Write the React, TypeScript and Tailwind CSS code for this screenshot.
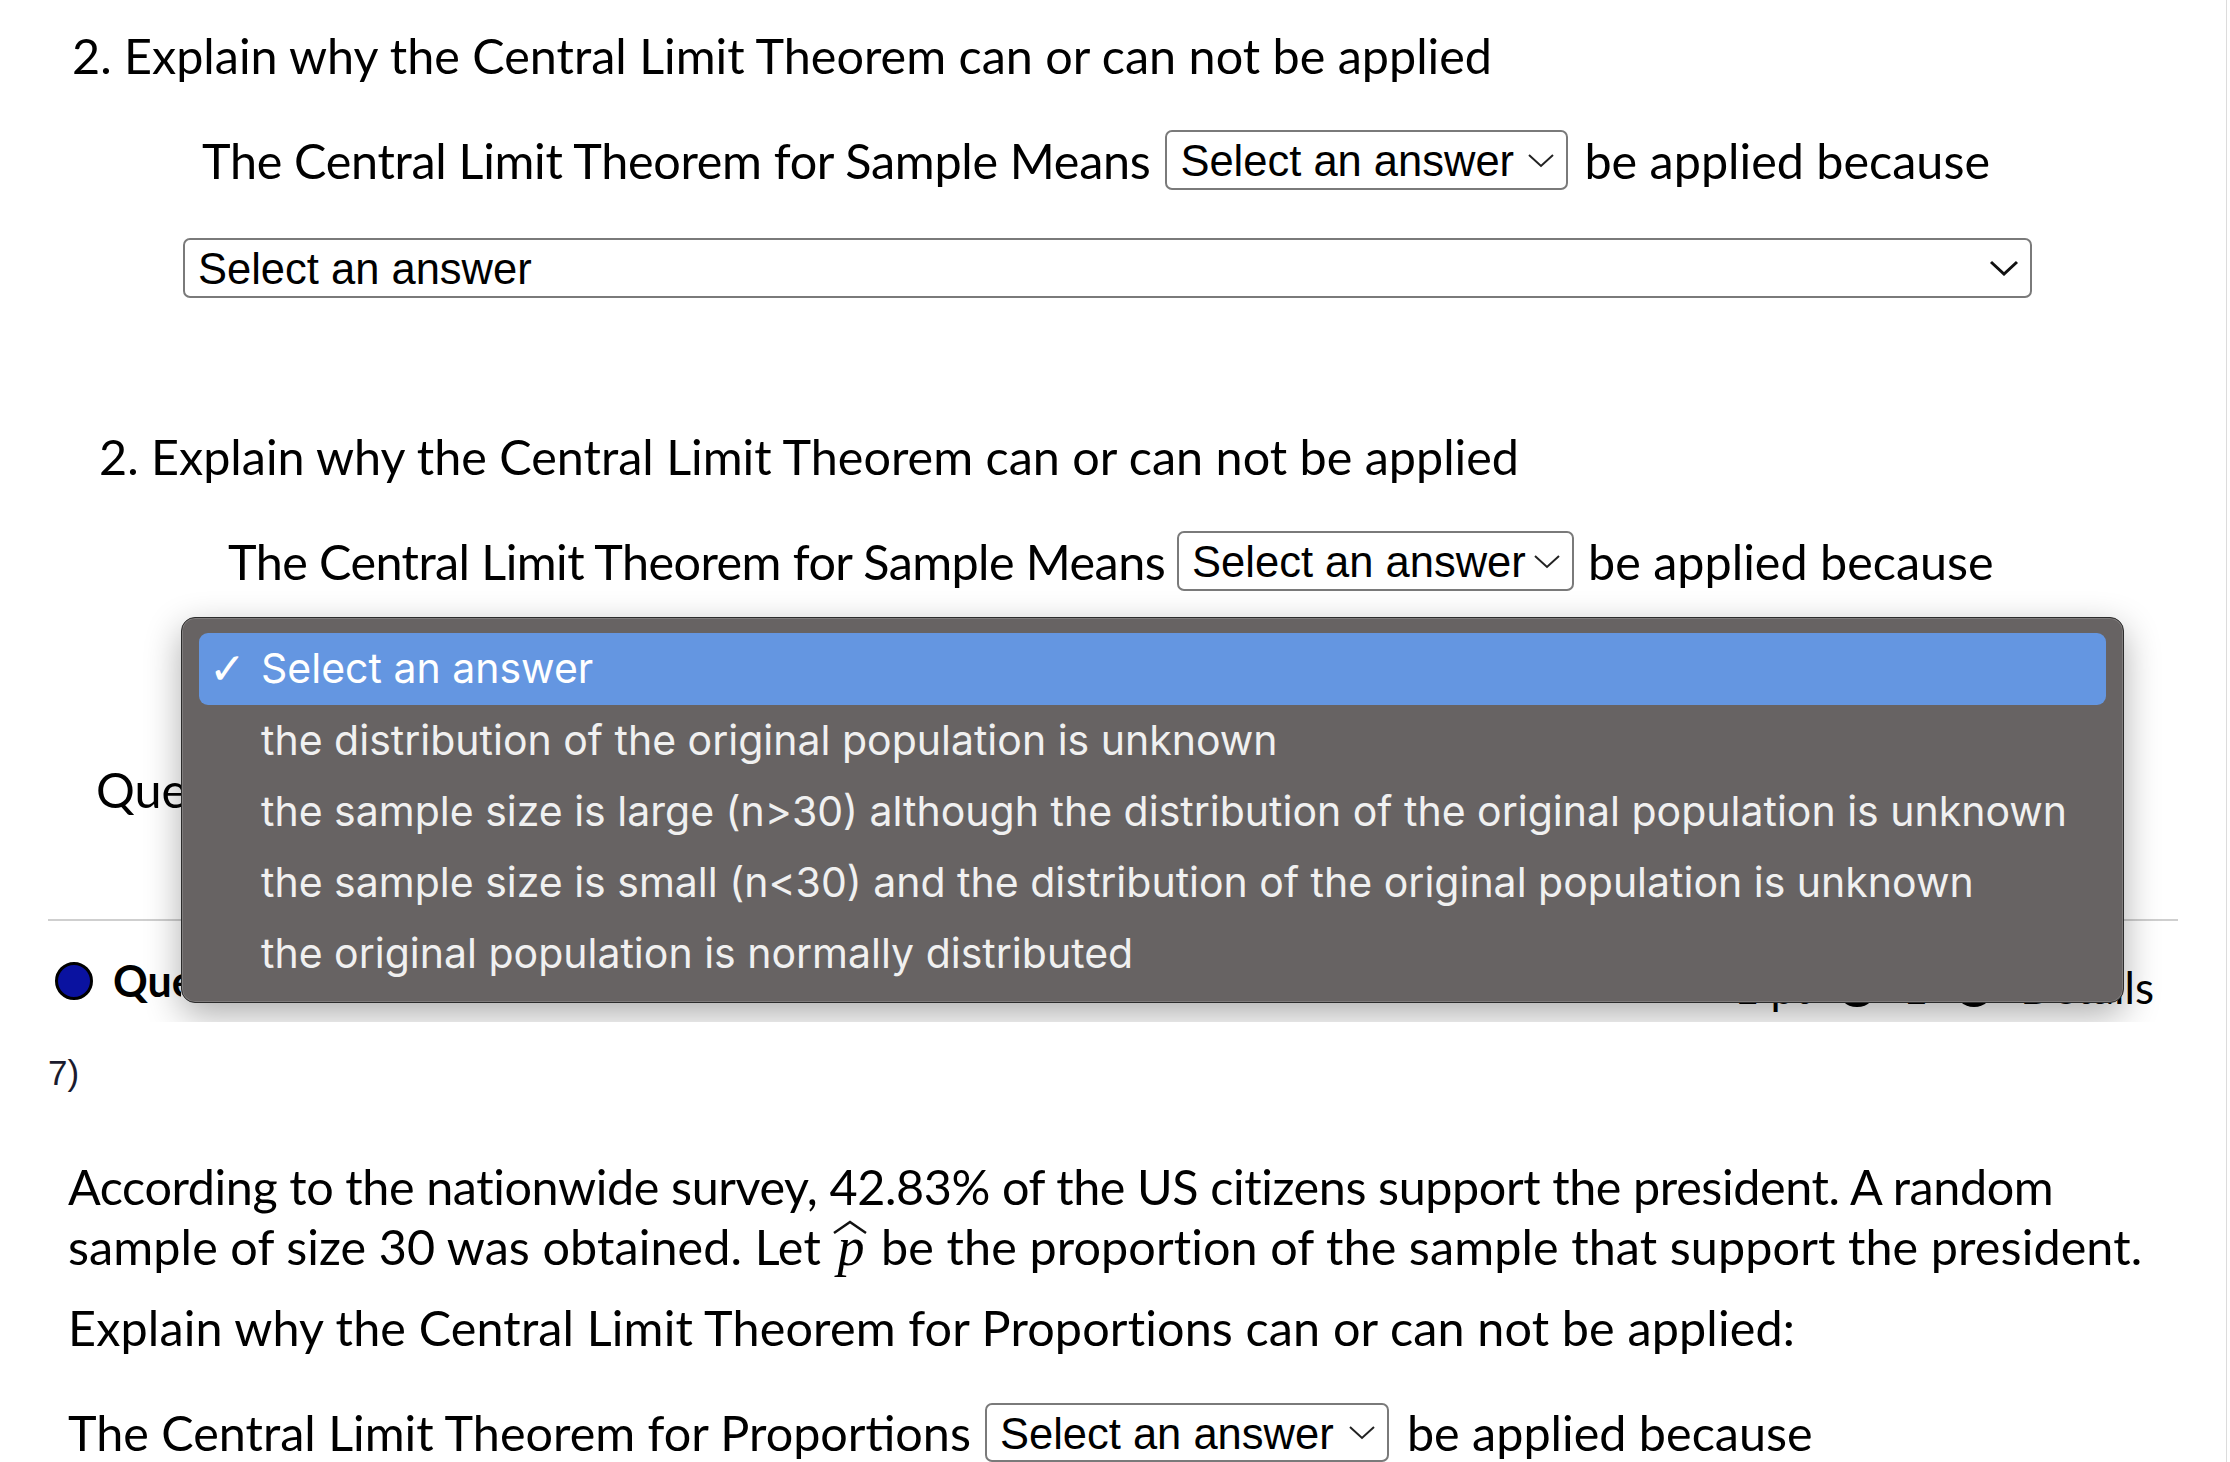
import React from "react";

const body = "font-['Lato','Liberation_Sans',sans-serif] text-[48.5px] text-black";
const arial = "font-['Liberation_Sans',Arial,sans-serif]";

function Chevron({ big }: { big?: boolean }) {
  return big ? (
    <svg width="30" height="16" viewBox="0 0 30 16" className="shrink-0">
      <path d="M2 2 L15 14 L28 2" fill="none" stroke="#111" strokeWidth="3" />
    </svg>
  ) : (
    <svg width="28" height="15" viewBox="0 0 28 15" className="shrink-0">
      <path d="M2 2 L14 13 L26 2" fill="none" stroke="#222" strokeWidth="2" />
    </svg>
  );
}

function FakeSelect({ className, big }: { className: string; big?: boolean }) {
  return (
    <div
      className={`flex items-center justify-between border-2 border-[#7a7a7a] rounded-[7px] bg-white pl-[13px] pr-[11px] ${arial} text-[43.5px] text-black ${className}`}
    >
      <span className="whitespace-nowrap pt-[4px]">Select an answer</span>
      <Chevron big={big} />
    </div>
  );
}

const options = [
  "the distribution of the original population is unknown",
  "the sample size is large (n>30) although the distribution of the original population is unknown",
  "the sample size is small (n<30) and the distribution of the original population is unknown",
  "the original population is normally distributed",
];

function Popup() {
  return (
    <div className="absolute left-[181px] top-[617px] w-[1943px] h-[386px] rounded-[14px] bg-[#676363] border border-[#2c2c2c] shadow-[0_12px_36px_rgba(0,0,0,0.32),inset_0_0_0_1px_rgba(255,255,255,0.16)] px-[17px] pt-[15px] font-['Inter','Liberation_Sans',sans-serif] text-[41px] text-[#f0f0f0]">
      <div className="flex items-center h-[72px] rounded-[9px] bg-[#6496e1] text-white">
        <span className="w-[62px] pl-[10px] font-['DejaVu_Sans',sans-serif] font-bold text-[44px]">✓</span>
        <span>Select an answer</span>
      </div>
      {options.map((o) => (
        <div key={o} className="flex items-center h-[71px] pl-[62px] whitespace-nowrap">
          {o}
        </div>
      ))}
    </div>
  );
}

function PHat() {
  return (
    <span className="relative inline-block mx-[4px]">
      <svg width="36" height="16" viewBox="0 0 36 16" className="absolute left-[-5px] top-[3px]">
        <path d="M2 14 L18 3 L34 14" fill="none" stroke="#111" strokeWidth="2.5" />
      </svg>
      <span className="font-['Liberation_Serif',serif] italic text-[54px]">p</span>
    </span>
  );
}

export default function App() {
  return (
    <div className="w-[2230px] h-[1462px] overflow-hidden bg-white">
      <div className="w-[2227px] h-[1462px] border-r border-[#dcdcdc]">
        {/* upper part, the menu's shadow is cut at its bottom */}
        <div className={`relative h-[1022px] overflow-hidden ${body}`}>
          <div className="pt-[25px] pl-[72px] h-[85px] leading-[60px]">
            2. Explain why the Central Limit Theorem can or can not be applied
          </div>
          <div className="mt-[45px] flex items-center h-[60px] pl-[202px]">
            <span className="tracking-[-0.3px]">The Central Limit Theorem for Sample Means</span>
            <FakeSelect className="ml-[15px] w-[403px] h-[60px]" />
            <span className="ml-[16px]">be applied because</span>
          </div>
          <div className="mt-[48px] ml-[183px]">
            <FakeSelect big className="w-[1849px] h-[60px]" />
          </div>

          <div className="mt-[128px] pl-[99px] h-[60px] leading-[60px]">
            2. Explain why the Central Limit Theorem can or can not be applied
          </div>
          <div className="mt-[45px] flex items-center h-[60px] pl-[228px]">
            <span className="tracking-[-0.57px]">The Central Limit Theorem for Sample Means</span>
            <FakeSelect className="ml-[12px] w-[397px] h-[60px]" />
            <span className="ml-[14px]">be applied because</span>
          </div>

          <div className="mt-[168px] ml-[96px] w-[85px] overflow-hidden whitespace-nowrap h-[60px] leading-[60px]">
            Question Help:
          </div>

          <div className="mt-[100px] mx-[48px] h-[2px] bg-[#cfcfcf]" />

          <div className="mt-[38px] flex items-center h-[44px] pl-[55px] pr-[72px]">
            <span className="shrink-0 w-[38px] h-[38px] rounded-full bg-[#0a12a0] border-[3px] border-black" />
            <span className="ml-[20px] w-[68px] overflow-hidden whitespace-nowrap font-bold text-[43px]">Question 7</span>
            <div className="ml-auto mt-[12px] flex items-center gap-[26px] text-[44px]">
              <span className="w-[42px] h-[32px] border-[4px] border-black rounded-[3px]" />
              <span>1 pt</span>
              <span className="w-[40px] h-[40px] rounded-full border-[5px] border-black" />
              <span>1</span>
              <span className="w-[40px] h-[40px] rounded-full bg-black" />
              <span>Details</span>
            </div>
          </div>

          <Popup />
        </div>

        <div className={`pl-[48px] mt-[31px] h-[40px] leading-[40px] ${arial} text-[35px] text-[#1b1b2e]`}>7)</div>

        <div className={`${body} pl-[68px]`}>
          <p className="mt-[63px] leading-[60px]">
            <span className="tracking-[-0.4px]">
              According to the nationwide survey, 42.83% of the US citizens support the president. A random
            </span>
            <br />
            <span className="tracking-[0.1px]">
              sample of size 30 was obtained. Let <PHat /> be the proportion of the sample that support the president.
            </span>
          </p>
          <p className="mt-[20px] leading-[60px] tracking-[0.15px]">
            Explain why the Central Limit Theorem for Proportions can or can not be applied:
          </p>
          <div className="mt-[46px] flex items-center h-[59px]">
            <span>The Central Limit Theorem for Proportions</span>
            <FakeSelect className="ml-[14px] w-[404px] h-[59px]" />
            <span className="ml-[18px]">be applied because</span>
          </div>
        </div>
      </div>
    </div>
  );
}
